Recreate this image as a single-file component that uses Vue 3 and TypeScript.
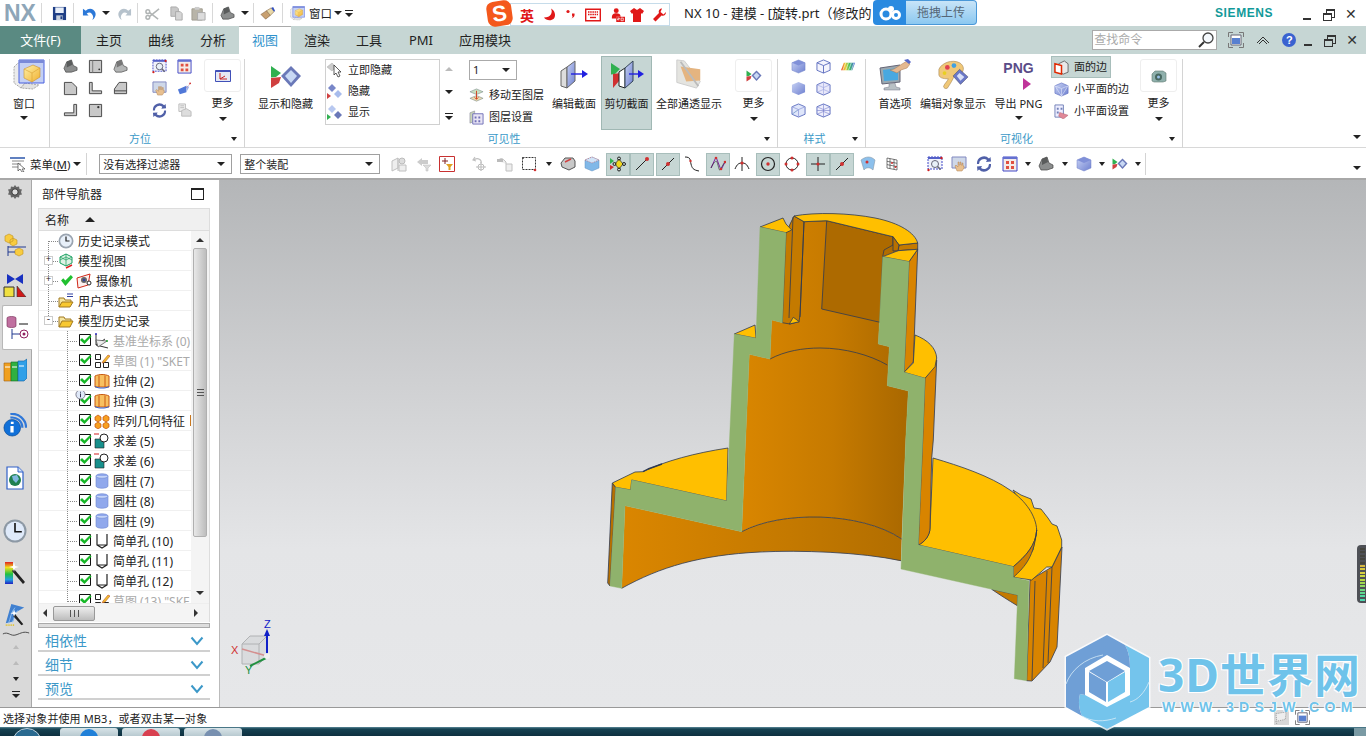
<script setup lang="ts">
interface ToolItem {
  icon?: string;
  w: number;
  on?: boolean;
  caret?: boolean;
}

interface TreeRow {
  label: string;
  icon: string;
  level: 0 | 1;
  check?: boolean;
  expand?: "+" | "-";
  gray?: boolean;
  info?: boolean;
  mark?: boolean;
}

const tabs = ["主页", "曲线", "分析", "视图", "渲染", "工具", "PMI", "应用模块"];

const orientIcons = ["v-iso", "v-top", "v-iso2", "v-front", "v-l", "v-cut", "v-r", "v-dot"];
const fitIcons = ["fit", "fit-sel", "pan", "persp", "rotate", "print"];
const styleIcons = ["c1", "c2", "rainbow", "c3", "c4", "", "c5", "c6"];

const imeIcons = [
  { icon: "i-moon", w: 13, ml: 9 },
  { icon: "i-punct", w: 9, ml: 10 },
  { icon: "i-keys", w: 16, ml: 10 },
  { icon: "i-user", w: 16, ml: 9 },
  { icon: "i-shirt", w: 14, ml: 4 },
  { icon: "i-wrench", w: 13, ml: 9 },
];

const toolItems: ToolItem[] = [
  { icon: "g-filter", w: 24 },
  { icon: "g-arrow", w: 24 },
  { icon: "red-filter", w: 24 },
  { w: 9 },
  { icon: "g-target", w: 24 },
  { icon: "g-wire", w: 25 },
  { icon: "box-sel", w: 24 },
  { caret: true, w: 15 },
  { icon: "v-tool", w: 24 },
  { icon: "cube-sel", w: 23 },
  { w: 3 },
  { icon: "s-all", w: 24, on: true },
  { icon: "s-end", w: 24, on: true },
  { w: 2 },
  { icon: "s-mid", w: 24, on: true },
  { icon: "s-curve", w: 24 },
  { w: 2 },
  { icon: "s-ctl", w: 24, on: true },
  { icon: "s-int", w: 24 },
  { w: 2 },
  { icon: "s-center", w: 24, on: true },
  { icon: "s-quad", w: 24 },
  { w: 2 },
  { icon: "s-cross", w: 24, on: true },
  { icon: "s-mid", w: 24, on: true },
  { w: 2 },
  { icon: "s-face", w: 24 },
  { icon: "s-grid", w: 24 },
  { w: 8 },
  { w: 1 },
  { w: 10 },
  { icon: "fit", w: 24 },
  { icon: "pan", w: 24 },
  { icon: "rotate", w: 26 },
  { icon: "fit-sel", w: 25 },
  { caret: true, w: 12 },
  { icon: "v-iso", w: 24 },
  { caret: true, w: 13 },
  { icon: "c1", w: 25 },
  { caret: true, w: 12 },
  { icon: "show-hide", w: 23 },
  { caret: true, w: 14 },
];

const treeRows: TreeRow[] = [
  { label: "历史记录模式", icon: "t-clock", level: 0 },
  { label: "模型视图", icon: "t-view", level: 0, expand: "+" },
  { label: "摄像机", icon: "t-cam", level: 0, expand: "+", check: true },
  { label: "用户表达式", icon: "t-folder2", level: 0 },
  { label: "模型历史记录", icon: "t-folder", level: 0, expand: "-" },
  { label: "基准坐标系 (0)", icon: "t-csys", level: 1, check: true, gray: true },
  { label: "草图 (1) \"SKET", icon: "t-sketch", level: 1, check: true, gray: true },
  { label: "拉伸 (2)", icon: "t-extrude", level: 1, check: true },
  { label: "拉伸 (3)", icon: "t-extrude", level: 1, check: true, info: true },
  { label: "阵列几何特征", icon: "t-pattern", level: 1, check: true, mark: true },
  { label: "求差 (5)", icon: "t-sub", level: 1, check: true },
  { label: "求差 (6)", icon: "t-sub", level: 1, check: true },
  { label: "圆柱 (7)", icon: "t-cyl", level: 1, check: true },
  { label: "圆柱 (8)", icon: "t-cyl", level: 1, check: true },
  { label: "圆柱 (9)", icon: "t-cyl", level: 1, check: true },
  { label: "简单孔 (10)", icon: "t-hole", level: 1, check: true },
  { label: "简单孔 (11)", icon: "t-hole", level: 1, check: true },
  { label: "简单孔 (12)", icon: "t-hole", level: 1, check: true },
  { label: "草图 (13) \"SKE", icon: "t-sketch", level: 1, check: true, gray: true },
];

const sections = ["相依性", "细节", "预览"];

const meterBars = ["#45453f", "#45453f", "#45453f", "#45453f", "#45453f", "#d8b840", "#d8c840", "#d8d040", "#c8d840", "#b8d840", "#a0d850", "#90d860", "#70d880", "#60d890", "#50d8a0", "#50d8b0"];

const iconHref = (name: string) => `#${name}`;
</script>

<template>
  <div class="app">
    <svg class="sprite" width="0" height="0" aria-hidden="true">
      <defs>
        <linearGradient id="gr-cube" x1="0" y1="0" x2="1" y2="1"><stop offset="0" stop-color="#c8d2f4" /><stop offset="1" stop-color="#6e80d0" /></linearGradient>
        <linearGradient id="gr-yel" x1="0" y1="0" x2="1" y2="1"><stop offset="0" stop-color="#fff2a8" /><stop offset="1" stop-color="#f0b030" /></linearGradient>
        <linearGradient id="gr-rain" x1="0" y1="0" x2="1" y2="0"><stop offset="0" stop-color="#e84030" /><stop offset=".3" stop-color="#f0d030" /><stop offset=".6" stop-color="#40c060" /><stop offset="1" stop-color="#4060e0" /></linearGradient>
        <linearGradient id="gr-rail" x1="0" y1="0" x2="0" y2="1"><stop offset="0" stop-color="#e02020" /><stop offset=".25" stop-color="#f0e020" /><stop offset=".55" stop-color="#20c040" /><stop offset=".8" stop-color="#20a0e0" /><stop offset="1" stop-color="#2020c0" /></linearGradient>
        <linearGradient id="gr-inner" x1="0" y1="0" x2="1" y2="0"><stop offset="0" stop-color="#d98600" /><stop offset=".55" stop-color="#c67a00" /><stop offset="1" stop-color="#a96800" /></linearGradient>
        <linearGradient id="gr-ring" x1="0" y1="0" x2="1" y2="0"><stop offset="0" stop-color="#da8600" /><stop offset=".6" stop-color="#c47900" /><stop offset="1" stop-color="#b26e00" /></linearGradient>
      </defs>
      <symbol id="save" viewBox="0 0 16 16"><path d="M1 1h14v14H1z" fill="#1f3f86" /><path d="M3.500 1.500h9v6h-9z" fill="#e8eef8" /><path d="M4.500 10h7v5h-7z" fill="#c8d0dc" /><path d="M9 11h2v3H9z" fill="#1f3f86" /></symbol>
      <symbol id="undo" viewBox="0 0 16 16"><path d="M1 3v7h6L5 8c3-2 6-1 7 4-.5 1-.5 2-1 3 4-3 5-8 1-11-3-2-6-1-8 1L1 3z" fill="#2b78d8" /></symbol>
      <symbol id="redo" viewBox="0 0 16 16"><path d="M15 3v7H9l2-2c-3-2-6-1-7 4 .5 1 .5 2 1 3-4-3-5-8-1-11 3-2 6-1 8 1l3-2z" fill="#b6c2cc" /></symbol>
      <symbol id="cut" viewBox="0 0 16 16"><g fill="none" stroke="#b0b4b4" stroke-width="1.600"><circle cx="3" cy="12" r="2" /><circle cx="3" cy="6" r="2" /><path d="M5 11l10-8M5 7l9 7" /></g></symbol>
      <symbol id="copy" viewBox="0 0 16 16"><path d="M2 1h6l2 2v8H2z" fill="#c8c8c8" stroke="#aaa" /><path d="M7 6h5l2 2v7H7z" fill="#d6d6d6" stroke="#aaa" /></symbol>
      <symbol id="paste" viewBox="0 0 16 16"><path d="M1 3h11v12H1z" fill="#b8b4a8" stroke="#a09c90" /><path d="M4 1h5v3H4z" fill="#ccc" /><path d="M7 7h8v8H7z" fill="#dcdcdc" stroke="#aaa" /></symbol>
      <symbol id="brush" viewBox="0 0 16 16"><path d="M1 9l6-4 4 5-5 4z" fill="#c8a070" stroke="#806040" stroke-width=".6" /><path d="M7 5l5-3 3 4-4 4z" fill="#e8d8a8" stroke="#806040" stroke-width=".6" /><path d="M12 2l2-1 2 4-1 1z" fill="#3050c0" /></symbol>
      <symbol id="v-iso" viewBox="0 0 16 16"><path d="M1 10L4 3l5-2 2 6 4 2v3l-6 2H3z" fill="#8b8d8d" stroke="#444" stroke-width=".7" /><path d="M4 3l5-2 1 5-6 3z" fill="#5a5c5c" /></symbol>
      <symbol id="v-iso2" viewBox="0 0 16 16"><path d="M1 11L4 3l5-2 2 6 4 2v3l-6 2H3z" fill="#b4b6b6" stroke="#444" stroke-width=".7" /><path d="M4 3l5-2 1 5-6 3z" fill="#777" /></symbol>
      <symbol id="v-top" viewBox="0 0 16 16"><path d="M1.500 1.500h13v13h-13z" fill="#c8c8c8" stroke="#444" /><path d="M5 1.500v13" stroke="#777" fill="none" /><circle cx="12" cy="11" r="1" fill="#333" /></symbol>
      <symbol id="v-front" viewBox="0 0 16 16"><path d="M1.500 1.500h8l5 5v8h-13z" fill="#c8c8c8" stroke="#444" /></symbol>
      <symbol id="v-l" viewBox="0 0 16 16"><path d="M1.500 1.500h3v9h10v3h-13z" fill="#c8c8c8" stroke="#444" /></symbol>
      <symbol id="v-cut" viewBox="0 0 16 16"><path d="M1.500 13.500v-5l5-7h8v12z" fill="#c8c8c8" stroke="#444" /><path d="M1.500 10.500h13" stroke="#444" fill="none" /></symbol>
      <symbol id="v-r" viewBox="0 0 16 16"><path d="M11.500 1.500h3v12h-13v-3h10z" fill="#c8c8c8" stroke="#444" /></symbol>
      <symbol id="v-dot" viewBox="0 0 16 16"><path d="M1.500 1.500h13v13h-13z" fill="#c8c8c8" stroke="#444" /><circle cx="11" cy="4.500" r="1.200" fill="#333" /></symbol>
      <symbol id="fit" viewBox="0 0 16 16"><path d="M1 1h14v12H1z" fill="#f0f2fa" stroke="#4048c8" stroke-dasharray="2 1" /><path d="M1 1h14v2H1z" fill="#5460c8" /><circle cx="8" cy="8" r="3.500" fill="#e8f0f8" stroke="#667" /><path d="M10.500 10.500l3 3" stroke="#667" stroke-width="1.600" /><circle cx="1.500" cy="14" r="1.200" fill="#d02020" /><circle cx="14.500" cy="2" r="1.200" fill="#d02020" /></symbol>
      <symbol id="fit-sel" viewBox="0 0 16 16"><path d="M1 1h14v14H1z" fill="#f4ece8" stroke="#4048c8" /><path d="M1 1h14v2H1z" fill="#6470d0" /><path d="M4 5h3v3H4zM9 5h3v3H9zM4 10h3v3H4zM9 10h3v3H9z" fill="#e05040" /></symbol>
      <symbol id="pan" viewBox="0 0 16 16"><path d="M1 1h14v11H1z" fill="#cfd8e8" stroke="#8088c0" /><path d="M6 15l-2-5 1-1 2 2V6h1v3h1V6h1v3h1V7h1v3h1v2l-2 3z" fill="#e8c090" stroke="#b08050" stroke-width=".5" /></symbol>
      <symbol id="persp" viewBox="0 0 16 16"><path d="M1 9l9-4v7l-7 2z" fill="#5078d8" /><path d="M10 5l3 1-3 6z" fill="#9cb0e8" /><circle cx="14" cy="2.500" r="1" fill="#d03030" /><path d="M10 7l4-4" stroke="#d03030" stroke-width=".6" stroke-dasharray="1 1" /></symbol>
      <symbol id="rotate" viewBox="0 0 16 16"><path d="M3 8a5 5 0 0 1 8-4l-1 2 5-.5-.5-4.500-1.500 1.500A7 7 0 0 0 1 8zM13 8a5 5 0 0 1-8 4l1-2-5 .5.5 4.500 1.500-1.500A7 7 0 0 0 15 8z" fill="#5060a8" /></symbol>
      <symbol id="print" viewBox="0 0 16 16"><path d="M2 1h7v8H2z" fill="#eee" stroke="#bbb" /><path d="M3.500 3h4M3.500 5h4" stroke="#bbb" /><path d="M5 8l5-2 5 3v5H5z" fill="#ddd" stroke="#bbb" /></symbol>
      <symbol id="axis" viewBox="0 0 16 16"><path d="M.5 2.500h15v11H.5z" fill="#e4e8f4" stroke="#4050b8" /><path d="M.5 2.500h15v1.500H.5z" fill="#4050b8" /><path d="M5 5v6h7M5 11l5-3" fill="none" stroke="#c82020" /></symbol>
      <symbol id="win-cube" viewBox="0 0 32 32"><path d="M1 8l4-4h7v20L8 29 1 24z" fill="#ececec" stroke="#aaa" stroke-dasharray="2 1" /><path d="M12 24l14 2-6 4-12-1z" fill="#e2e2e2" stroke="#aaa" stroke-dasharray="2 1" /><path d="M6 1h25v23H6z" fill="#c4d0f4" stroke="#4860e0" /><path d="M6 1h25v3H6z" fill="#7a8ad8" /><path d="M11 10l9-4 7 3v9l-8 5-8-4z" fill="url(#gr-yel)" stroke="#c89030" stroke-width=".6" /><path d="M11 10l8 4 8-5M19 14v9" fill="none" stroke="#d8a030" stroke-width=".6" /></symbol>
      <symbol id="show-hide" viewBox="0 0 32 24"><path d="M1 1l10 7-5 4-5 .5z" fill="#30b050" /><path d="M1 23V13l10-1-2 6z" fill="#d04040" /><path d="M11 11L21 1l10 10-10 11z" fill="#6a78b8" /><path d="M15 11l6-6 6 6-6 7z" fill="#c8d8f4" /></symbol>
      <symbol id="cursor-hide" viewBox="0 0 16 16"><path d="M0 5l5-4 4 4-4 4z" fill="#ccc" stroke="#aaa" stroke-width=".5" /><path d="M7 3l7 7h-3l2 4-2 1-2-4-2 2z" fill="#fff" stroke="#333" stroke-width=".8" /></symbol>
      <symbol id="hide" viewBox="0 0 16 16"><path d="M1 5l4-4 4 4-4 4z" fill="#7886c8" /><path d="M7 11l4-4 4 4-4 4z" fill="#a8bcec" /><path d="M0 10l4 3-4 3z" fill="#d04040" /></symbol>
      <symbol id="show" viewBox="0 0 16 16"><path d="M1 5l4-4 4 4-4 4z" fill="#b8c8f0" /><path d="M7 11l4-4 4 4-4 4z" fill="#6a78b8" /><path d="M0 10l4 3-4 3z" fill="#30b050" /></symbol>
      <symbol id="layer-move" viewBox="0 0 16 16"><path d="M1 4l7-3 7 3-7 3z" fill="#c8e0c0" stroke="#788" stroke-width=".6" /><path d="M1 11l7-3 7 3-7 3z" fill="#ecdcb0" stroke="#788" stroke-width=".6" /><path d="M8 3v9M6 10l2 2 2-2" fill="none" stroke="#d04020" /></symbol>
      <symbol id="layer-set" viewBox="0 0 16 16"><path d="M1 3l5-2v11l-5 2z" fill="#c8d4b8" stroke="#889" stroke-width=".6" /><path d="M4 4h11v11H4z" fill="#e8e4f4" stroke="#7070b8" /><path d="M6 7h2v2H6zM10 7h2v2h-2zM6 11h2v2H6zM10 11h2v2h-2z" fill="#7070b8" /></symbol>
      <symbol id="edit-sec" viewBox="0 0 28 28"><path d="M1 11l6-4v21l-6-2z" fill="#ddd" stroke="#666" /><path d="M7 7l8-6v20l-8 7z" fill="url(#gr-cube)" stroke="#666" /><path d="M11 14h12" stroke="#2020e0" stroke-width="1.400" /><path d="M22 10l6 4-6 4z" fill="#2020e0" /></symbol>
      <symbol id="cut-sec" viewBox="0 0 34 30"><path d="M1 4l9 6-5 5-4 .5z" fill="#30b050" /><path d="M3 29V15l8-1-2 8z" fill="#d03030" /><path d="M9 13l6-4v20l-6-2z" fill="#fff" stroke="#222" /><path d="M15 9l8-7v20l-8 7z" fill="url(#gr-cube)" stroke="#345" /><path d="M19 15h10" stroke="#2020e0" stroke-width="1.400" /><path d="M28 11l6 4-6 4z" fill="#2020e0" /></symbol>
      <symbol id="xray" viewBox="0 0 28 32"><path d="M1 1l8 1 17 22-4 7-21-6z" fill="#e4e4e0" stroke="#ccc" /><path d="M5 8l21 3v12l-15 1z" fill="#e4b480" /><path d="M5 3l19 26" stroke="#bbb" stroke-width="2" fill="none" /></symbol>
      <symbol id="c1" viewBox="0 0 16 16"><path d="M1 4l7-3 7 3v8l-7 3-7-3z" fill="url(#gr-cube)" stroke="#7080c8" stroke-width=".5" /><path d="M1 4l7 3 7-3-7-3z" fill="#8090d8" /></symbol>
      <symbol id="c2" viewBox="0 0 16 16"><path d="M1 4l7-3 7 3v8l-7 3-7-3z" fill="#f4f4fc" stroke="#6070c0" /><path d="M1 4l7 3 7-3M8 7v8" fill="none" stroke="#6070c0" /></symbol>
      <symbol id="c3" viewBox="0 0 16 16"><path d="M1 4l7-3 7 3v8l-7 3-7-3z" fill="url(#gr-cube)" /></symbol>
      <symbol id="c4" viewBox="0 0 16 16"><path d="M1 4l7-3 7 3v8l-7 3-7-3z" fill="#e8e8fa" stroke="#6070c0" /><path d="M1 4l7 3 7-3M8 7v8M1 12l7-3 7 3M8 1v8" fill="none" stroke="#a0a8e0" stroke-width=".7" /></symbol>
      <symbol id="c5" viewBox="0 0 16 16"><path d="M1 4l7-3 7 3v8l-7 3-7-3z" fill="#dfe6fa" stroke="#6070c0" /><path d="M1 4l7 3 7-3M8 7v8" fill="none" stroke="#a0a8e0" /><path d="M1 12l7-5" stroke="#80a0d0" fill="none" /></symbol>
      <symbol id="c6" viewBox="0 0 16 16"><path d="M1 4l7-3 7 3v8l-7 3-7-3z" fill="#eeeefc" stroke="#6070c0" /><path d="M1 4l7 3 7-3M8 7v8M1 12l7-3 7 3M8 1v8M1 8l14 0" fill="none" stroke="#8088d0" stroke-width=".7" /></symbol>
      <symbol id="rainbow" viewBox="0 0 16 16"><path d="M3 4h12l-3 8H0z" fill="url(#gr-rain)" /><path d="M5 4L2 12M8 4l-3 8M11 4l-3 8M14 4l-3 8" stroke="#fff" stroke-width=".6" /></symbol>
      <symbol id="pref" viewBox="0 0 32 32"><path d="M1 9l20-3v17L3 25z" fill="#9aa8b0" stroke="#667" /><path d="M4 11l15-2v12L5 22z" fill="#48a8e0" /><path d="M10 25l6-1 1 4 4 1v2H5v-2l5-1z" fill="#b8c0c4" stroke="#778" stroke-width=".5" /><path d="M11 11l4-1 8-5 5-3 3 3-3 4-6 2-4 3z" fill="#e4b890" stroke="#a87850" stroke-width=".5" /><path d="M25 1l5 4 2-2-3-3z" fill="#5868c8" /></symbol>
      <symbol id="palette" viewBox="0 0 34 32"><path d="M2 10c3-7 14-11 22-7 5 3 5 8 2 11-4 2-8 2-9 6-2 4-4 7-6 10-2 1-4 0-4-2 1-3 4-5 5-8-3 0-9 0-10-4z" fill="#f0c878" stroke="#a08050" stroke-width=".6" /><circle cx="11" cy="8" r="2.500" fill="#e04050" /><circle cx="18" cy="6" r="2.500" fill="#40a0e0" /><circle cx="8" cy="14" r="2" fill="#e8d020" /><path d="M17 17l7-7 9 8-8 8z" fill="#6a78c8" stroke="#445" stroke-width=".5" /><path d="M21 17l3-3 5 4-4 4z" fill="#d8e0f8" /></symbol>
      <symbol id="face-edge" viewBox="0 0 16 16"><path d="M5 4l6-3 4 3v9l-5 2-5-2z" fill="#e8e8e8" stroke="#666" /><path d="M1 4l7 2v9l-7-2z" fill="#fff" stroke="#e02800" stroke-width="1.600" /></symbol>
      <symbol id="facet-edge" viewBox="0 0 16 16"><path d="M1 4l7-3 7 3v8l-7 3-7-3z" fill="url(#gr-cube)" stroke="#6070c0" stroke-width=".7" /><path d="M1 4l7 3 7-3M8 7v8M1 4l7 11M15 4L8 15" fill="none" stroke="#e8ecfc" stroke-width=".6" /></symbol>
      <symbol id="facet-set" viewBox="0 0 16 16"><path d="M1 1h9v13H1z" fill="#eef" stroke="#7080b8" /><path d="M3 4h2v2H3zM7 4h2v2H7zM3 8h2v2H3z" fill="#7080b8" /><path d="M6 9l9 3-5 4-5-3z" fill="#e08898" stroke="#b06070" stroke-width=".5" /></symbol>
      <symbol id="camera" viewBox="0 0 16 16"><path d="M1 6l3-3h8l3 2v8l-3 1H3l-2-1z" fill="#8fb0ac" stroke="#607870" stroke-width=".6" /><circle cx="7.500" cy="9" r="3.500" fill="#486860" /><circle cx="7.500" cy="9" r="1.500" fill="#98c0e8" /></symbol>
      <symbol id="menu" viewBox="0 0 16 16"><path d="M0 1h15v2H0z" fill="#6080c0" /><path d="M2 5h12M2 8h9M2 11h6" stroke="#888" /><path d="M8 7l7 6h-3l2 3h-2l-2-3-2 2z" fill="#fff" stroke="#444" stroke-width=".7" /></symbol>
      <symbol id="g-filter" viewBox="0 0 16 16"><path d="M1 5l6-3v10l-6 3zM7 2v13" fill="#eee" stroke="#c0c0c0" /><circle cx="11" cy="5" r="3" fill="#ddd" stroke="#bbb" /><path d="M8 9h7v6H8z" fill="#eee" stroke="#c0c0c0" /></symbol>
      <symbol id="g-arrow" viewBox="0 0 16 16"><path d="M2 6l5-4v2h6v4H7v2z" fill="#ccc" /><path d="M8 9h8l-3 3v3h-2v-3z" fill="#ddd" stroke="#bbb" stroke-width=".5" /></symbol>
      <symbol id="red-filter" viewBox="0 0 16 16"><path d="M.5 .5h15v15H.5z" fill="#fff" stroke="#c83030" /><path d="M3 5h6M6 2v6" stroke="#802020" /><path d="M7 8h7l-2.500 3v3h-2v-3z" fill="#e0a020" /></symbol>
      <symbol id="g-target" viewBox="0 0 16 16"><path d="M3 1L1 4l3 1M2 4c4-3 8 0 7 3" fill="none" stroke="#c0c0c0" stroke-width="1.200" /><circle cx="9" cy="11" r="3" fill="none" stroke="#bbb" /><path d="M4 11h10M9 6v9" stroke="#bbb" /></symbol>
      <symbol id="g-wire" viewBox="0 0 16 16"><path d="M1 5c2-3 4-3 6-1l2 2v9h6V8H9" fill="#eee" stroke="#c0c0c0" /><path d="M0 3h6v3H0z" fill="#bbb" /></symbol>
      <symbol id="box-sel" viewBox="0 0 16 16"><path d="M1.500 1.500h13v12h-13z" fill="none" stroke="#333" stroke-dasharray="2 1" /><circle cx="14" cy="14" r="1.300" fill="#d03030" /><circle cx="2" cy="2" r="1" fill="#555" /></symbol>
      <symbol id="v-tool" viewBox="0 0 16 16"><path d="M1 7l4-5h8l2 3v6l-6 3-7-3z" fill="#c8c8c8" stroke="#555" /><path d="M5 6l6-3" stroke="#d04040" stroke-width="1.400" /></symbol>
      <symbol id="cube-sel" viewBox="0 0 16 16"><path d="M1 4l7-3 7 3v8l-7 3-7-3z" fill="#80b8e8" stroke="#6090c0" stroke-width=".5" /><path d="M1 4l7 3 7-3-7-3z" fill="#d0e4f8" stroke="#d04040" stroke-width=".5" stroke-dasharray="1 1" /></symbol>
      <symbol id="s-all" viewBox="0 0 16 16"><path d="M0 2l4 3-4 3z" fill="#30b050" /><path d="M0 9l4 2-4 3z" fill="#d03030" /><path d="M9 3l4 5-4 5-4-5z" fill="#f0d820" stroke="#222" stroke-width=".7" /><circle cx="9" cy="2.500" r="1.500" fill="none" stroke="#222" /><circle cx="9" cy="13.500" r="1.500" fill="none" stroke="#222" /><circle cx="14" cy="8" r="1.500" fill="none" stroke="#222" /><circle cx="4.500" cy="8" r="1.500" fill="none" stroke="#222" /></symbol>
      <symbol id="s-end" viewBox="0 0 16 16"><path d="M2 14L14 2" stroke="#222" fill="none" /><circle cx="13" cy="3" r="2" fill="#d03030" /></symbol>
      <symbol id="s-mid" viewBox="0 0 16 16"><path d="M2 14L14 2" stroke="#222" fill="none" /><circle cx="8" cy="8" r="2" fill="#d03030" /></symbol>
      <symbol id="s-curve" viewBox="0 0 16 16"><path d="M1 1c6 0 5 3 6 7s2 6 8 7" fill="none" stroke="#222" /><circle cx="6.500" cy="5" r="1.200" fill="#d03030" /></symbol>
      <symbol id="s-ctl" viewBox="0 0 16 16"><path d="M1 12L6 1l5 13 4-8" fill="none" stroke="#8020a0" /><path d="M1 12c3-6 5-8 6-6s2 9 3 8 3-6 5-8" fill="none" stroke="#222" stroke-width=".6" /><circle cx="6" cy="2" r="1.300" fill="#d03030" /><circle cx="11" cy="13" r="1.300" fill="#d03030" /><circle cx="15" cy="6" r="1.300" fill="#d03030" /></symbol>
      <symbol id="s-int" viewBox="0 0 16 16"><path d="M8 1v14M1 13c2-5 4-6 7-6s5 1 7 6" fill="none" stroke="#222" /><circle cx="8" cy="7" r="1.600" fill="#d03030" /></symbol>
      <symbol id="s-center" viewBox="0 0 16 16"><circle cx="8" cy="8" r="6.500" fill="none" stroke="#222" stroke-width="1.200" /><circle cx="8" cy="8" r="1.700" fill="#d03030" /></symbol>
      <symbol id="s-quad" viewBox="0 0 16 16"><circle cx="8" cy="8" r="6" fill="none" stroke="#222" /><circle cx="8" cy="2" r="1.500" fill="#d03030" /><circle cx="8" cy="14" r="1.500" fill="#d03030" /><circle cx="2" cy="8" r="1.500" fill="#d03030" /><circle cx="14" cy="8" r="1.500" fill="#d03030" /></symbol>
      <symbol id="s-cross" viewBox="0 0 16 16"><path d="M8 1v14M1 8h14" stroke="#222" /><circle cx="8" cy="8" r="1.600" fill="#d03030" /></symbol>
      <symbol id="s-face" viewBox="0 0 16 16"><path d="M1 4c5-4 10-4 14 0l-2 10c-3-3-7-3-9 0z" fill="#8cc0ec" stroke="#8898a8" stroke-width=".6" /><circle cx="7" cy="6" r="1.500" fill="#d03030" /></symbol>
      <symbol id="s-grid" viewBox="0 0 16 16"><path d="M3 2l10 2v10L3 12zM6 2.600v10M10 3.400v10M3 5.300l10 2M3 8.600l10 2" fill="#fff" stroke="#444" stroke-width=".7" /><circle cx="8" cy="7" r="1" fill="#d03030" /><circle cx="11.500" cy="11" r="1" fill="#d03030" /></symbol>
      <symbol id="t-clock" viewBox="0 0 16 16"><circle cx="8" cy="8" r="7.500" fill="#9aa4b0" /><circle cx="8" cy="8" r="5.800" fill="#e8f0fa" /><path d="M8 3.500V8h3.500" fill="none" stroke="#222" stroke-width="1.200" /></symbol>
      <symbol id="t-view" viewBox="0 0 16 16"><path d="M8 1l6 3v6l-6 3-6-3V4z" fill="#dff2e4" stroke="#18a060" /><path d="M2 4l6 3 6-3M8 7v6M2 7l6-3 6 3M8 1v6" fill="none" stroke="#18a060" stroke-width=".7" /><path d="M8 15l6-3" stroke="#e02020" stroke-width="1.400" /></symbol>
      <symbol id="t-cam" viewBox="0 0 16 16"><path d="M1 5l13-4-2 11-10 3z" fill="#fdf0ee" stroke="#d02818" /><circle cx="8" cy="7" r="3" fill="#666" /><circle cx="8" cy="7" r="1.200" fill="#3040a0" /><circle cx="13" cy="10" r="2" fill="#fff" stroke="#222" /></symbol>
      <symbol id="t-folder" viewBox="0 0 16 16"><path d="M1 14V4h5l1 2h6v2" fill="#f6e6a0" stroke="#a07820" /><path d="M1 14l3-6h11l-3 6z" fill="#f8c830" stroke="#a07820" /></symbol>
      <symbol id="t-folder2" viewBox="0 0 16 16"><path d="M1 14V5h5l1 2h6v2" fill="#f6e6a0" stroke="#a07820" /><path d="M1 14l3-5h11l-3 5z" fill="#f8c830" stroke="#a07820" /><path d="M9 1h6M9 3.500h6" stroke="#3040a0" stroke-width="1.200" /></symbol>
      <symbol id="t-check" viewBox="0 0 12 12"><path d="M1 6l2-2 2 2 5-5 2 2-7 8z" fill="#20c030" /></symbol>
      <symbol id="t-box" viewBox="0 0 13 13"><path d="M.5 .5h11v11H.5z" fill="#fff" stroke="#111" /><path d="M1 6l2-2 2.500 2.500L11 1l1.500 1.500L5.500 10z" fill="#18b828" /></symbol>
      <symbol id="t-csys" viewBox="0 0 16 16"><path d="M2 1v11M2 12l12 3M2 12l9-6" fill="none" stroke="#333" /><path d="M2 7l11 1-9 6z" fill="#eee" stroke="#444" stroke-width=".7" /><circle cx="13" cy="8" r="1" fill="#20a030" /><circle cx="2" cy="1" r="1" fill="#3030c0" /></symbol>
      <symbol id="t-sketch" viewBox="0 0 16 16"><path d="M1.500 1.500h5v5h-5zM1.500 9.500h5v5h-5zM9.500 9.500h5v5h-5z" fill="#fff" stroke="#222" /><path d="M9 8l5-6 2 1-5 6-3 1z" fill="#f0c030" stroke="#c05020" stroke-width=".6" /></symbol>
      <symbol id="t-extrude" viewBox="0 0 16 16"><path d="M1 3c4-2 10-2 14 0v11H1z" fill="#f8c060" stroke="#c85810" /><path d="M5 2.500V14M11 2.500V14" stroke="#c85810" /><path d="M1 13c4 2 10 2 14 0v1c-4 2-10 2-14 0z" fill="#3060d0" /></symbol>
      <symbol id="t-pattern" viewBox="0 0 16 16"><g fill="#f8a020" stroke="#c05010" stroke-width=".7"><path d="M1 4l3-2 3 2v3l-3 2-3-2z" /><path d="M9 4l3-2 3 2v3l-3 2-3-2z" /><path d="M1 11l3-2 3 2v3l-3 2-3-2z" /><path d="M9 11l3-2 3 2v3l-3 2-3-2z" /></g></symbol>
      <symbol id="t-sub" viewBox="0 0 16 16"><path d="M0 1h5" stroke="#d02020" /><path d="M1 6h9v9H1z" fill="#18908c" stroke="#222" stroke-width=".6" /><circle cx="10" cy="5" r="4" fill="#fff" stroke="#222" /></symbol>
      <symbol id="t-cyl" viewBox="0 0 16 16"><path d="M2 3c0-3 12-3 12 0v10c0 3-12 3-12 0z" fill="#90a8ec" stroke="#7088d0" stroke-width=".6" /><path d="M2 3c0 3 12 3 12 0" fill="#c4d4f8" stroke="#7088d0" stroke-width=".6" /></symbol>
      <symbol id="t-hole" viewBox="0 0 16 16"><path d="M3 1v11l5 3 5-3V1M3 12h10" fill="none" stroke="#222" stroke-width="1.200" /></symbol>
      <symbol id="gear" viewBox="0 0 16 16"><path d="M8 1l1.500 2 2.500-.5.500 2.500 2.500.5L14 8l1 2.500-2.500.5-.5 2.500-2.500-.5L8 15l-1.500-2-2.500.5-.5-2.500-2.500-.5L2 8 1 5.500l2.500-.5.500-2.500 2.500.5z" fill="#666" /><circle cx="8" cy="8" r="3.200" fill="#ddd" stroke="#333" /></symbol>
      <symbol id="r-parts" viewBox="0 0 24 24"><path d="M2 3l4-2 4 2v5l-4 2-4-2zM7 7l3-2 4 2v4l-4 2-3-2z" fill="#f8cc40" stroke="#c09020" stroke-width=".6" /><path d="M12 17l4-2 4 2v4l-4 2-4-2z" fill="#f8cc40" stroke="#c09020" stroke-width=".6" /><path d="M5 13v10M5 14h18M5 19h7" stroke="#223a90" fill="none" /></symbol>
      <symbol id="r-constraint" viewBox="0 0 24 24"><path d="M4 1l8 5 8-5v10l-8-5-8 5z" fill="#1830c0" /><path d="M1 14h10v10H1z" fill="#f0e040" stroke="#333" /><path d="M14 24V13l9 11z" fill="#d01818" stroke="#333" stroke-width=".6" /></symbol>
      <symbol id="r-assy" viewBox="0 0 24 24"><path d="M1 2c0-2 9-2 9 0v8c0 2-9 2-9 0z" fill="#c070a0" stroke="#702850" stroke-width=".6" /><path d="M13 8h9" stroke="#111" /><path d="M6 13v10M6 18h8" stroke="#223a90" fill="none" /><circle cx="18" cy="18" r="4" fill="#fff" stroke="#902060" /><circle cx="18" cy="18" r="1.500" fill="#902060" /></symbol>
      <symbol id="r-books" viewBox="0 0 24 24"><path d="M1 5h7v18H1z" fill="#f0a020" stroke="#a06010" stroke-width=".6" /><path d="M8 4h7v19H8z" fill="#30b040" stroke="#107020" stroke-width=".6" /><path d="M15 3h6l3-2v19l-3 3h-6z" fill="#30a0e8" stroke="#1060a0" stroke-width=".6" /><path d="M2 9h5M9 9h5M16 8h5" stroke="#fff" /></symbol>
      <symbol id="r-info" viewBox="0 0 26 26"><circle cx="10" cy="16" r="9" fill="#1070d8" stroke="#0a4890" stroke-width=".7" /><path d="M8.500 9.500h3v2.500h-3zM8 14h3.500v7H8z" fill="#fff" /><path d="M8 5c7-1 13 4 13 11M8 1c9-1 17 6 17 15" fill="none" stroke="#3078d8" stroke-width="2.400" /></symbol>
      <symbol id="r-page" viewBox="0 0 18 24"><path d="M1 1h11l5 5v17H1z" fill="#fff" stroke="#3060c8" stroke-width="1.200" /><path d="M12 1v5h5" fill="#d0e0f8" stroke="#3060c8" /><circle cx="9" cy="14" r="6" fill="#208050" /><path d="M6 10l5-1 2 4-3 4-3-3z" fill="#80b8e0" /></symbol>
      <symbol id="r-clock" viewBox="0 0 24 24"><circle cx="12" cy="12" r="11.500" fill="#8c98a4" /><circle cx="12" cy="12" r="9.500" fill="#dfeafa" /><path d="M11.200 4h1.600v8h6v1.600h-7.600z" fill="#111" /></symbol>
      <symbol id="r-color" viewBox="0 0 24 24"><path d="M2 1h8v22H2z" fill="url(#gr-rail)" /><path d="M11 8l11 13-2 2L9 10z" fill="#222" /><path d="M11 1l1 4 4 1-4 1-1 4-1-4-4-1 4-1z" fill="#fff" /></symbol>
      <symbol id="r-feat" viewBox="0 0 24 26"><path d="M8 1l14 4-9 5-3 10-8 2z" fill="#4080d0" /><path d="M5 22c2-5 3-13 7-17M9 21c2-4 3-9 6-13" stroke="#90c0f0" fill="none" /><path d="M12 12l9 11-2 1-9-10z" fill="#222" /><path d="M11 7l1 3 3 1-3 1-1 3-1-3-3-1 3-1z" fill="#fff" /><path d="M2 24h10" stroke="#e0c020" stroke-width="2" stroke-dasharray="1 1" /></symbol>
      <symbol id="flag" viewBox="0 0 16 16"><path d="M0 0h16v16H0z" fill="#d8d8d8" /><path d="M2 4l11-2-1 8-9 2zM2 12l1 3" fill="#eee" stroke="#999" stroke-dasharray="1 1" /></symbol>
      <symbol id="maxi" viewBox="0 0 16 16"><path d="M.5 5V.5H5M11 .5h4.500V5M15.500 11v4.500H11M5 15.500H.5V11" fill="none" stroke="#777" /><path d="M3 3h10v10H3z" fill="#fff" stroke="#667" /><path d="M4 6h8v6H4z" fill="#5880d0" /></symbol>
      <symbol id="i-moon" viewBox="0 0 13 13"><path d="M8 0c2 4 0 9-7 9 2 3 7 4 10 1 2-3 1-8-3-10z" fill="#e01818" /></symbol>
      <symbol id="i-punct" viewBox="0 0 9 13"><circle cx="2" cy="3" r="1.600" fill="#e01818" /><path d="M6 5h2.500c.5 2-.5 4-3 5 1-1 1.500-2 .5-3z" fill="#e01818" /></symbol>
      <symbol id="i-keys" viewBox="0 0 16 13"><path d="M.7 .7h14.600v11.600H.7z" fill="#fff" stroke="#e01818" stroke-width="1.400" /><path d="M3 3.500h10M3 6h10" stroke="#e01818" stroke-width="1.400" stroke-dasharray="1.500 .7" /><path d="M5 9h6" stroke="#e01818" stroke-width="1.400" /></symbol>
      <symbol id="i-user" viewBox="0 0 16 16"><circle cx="6" cy="3" r="2.800" fill="#e01818" /><path d="M1 11c0-4 2-5 5-5s5 1 5 4H6v2H1z" fill="#e01818" /><path d="M6 10h10v6H6z" fill="#e01818" /><path d="M7.500 11.500h2v1h-2v1h2M11.500 11.500h2.500v3h-2.500z" fill="none" stroke="#fff" stroke-width=".8" /></symbol>
      <symbol id="i-shirt" viewBox="0 0 14 14"><path d="M4 0l3 2 3-2 4 3-2 3-1-1v9H3V5L2 6 0 3z" fill="#e01818" /></symbol>
      <symbol id="i-wrench" viewBox="0 0 13 13"><path d="M9 0C7 0 5 2 6 4.500L0 10.500 2.500 13l6-6C11 8 13 6 13 3.500L10.500 6 7.500 3.500z" fill="#e01818" /></symbol>
    </svg>

    <header class="titlebar">
      <span class="nx-logo">NX</span>
      <i class="vsep s1"></i>
      <svg class="qa q-save"><use href="#save" /></svg>
      <i class="vsep s2"></i>
      <svg class="qa q-undo"><use href="#undo" /></svg>
      <b class="caret q-c1"></b>
      <svg class="qa q-redo"><use href="#redo" /></svg>
      <i class="vsep s3"></i>
      <svg class="qa q-cut"><use href="#cut" /></svg>
      <svg class="qa q-copy"><use href="#copy" /></svg>
      <svg class="qa q-paste"><use href="#paste" /></svg>
      <i class="vsep s4"></i>
      <svg class="qa q-view"><use href="#v-iso" /></svg>
      <b class="caret q-c2"></b>
      <i class="vsep s5"></i>
      <svg class="qa q-brush"><use href="#brush" /></svg>
      <i class="vsep s6"></i>
      <svg class="qa q-win"><use href="#win-cube" /></svg>
      <span class="qa-label">窗口</span>
      <b class="caret"></b>
      <b class="caret-bar"></b>

      <div class="ime">
        <span class="ime-s">S</span>
        <div class="ime-bar">
          <span class="ime-en">英</span>
          <svg v-for="g in imeIcons" :key="g.icon" :style="{ width: g.w + 'px', height: '14px', marginLeft: g.ml + 'px' }"><use :href="iconHref(g.icon)" /></svg>
        </div>
      </div>

      <span class="doc-title">NX 10 - 建模 - [旋转.prt（修改的</span>
      <span class="cloud">
        <svg width="24" height="16" viewBox="0 0 24 16"><circle cx="8" cy="9" r="5" fill="none" stroke="#fff" stroke-width="3" /><circle cx="18" cy="10" r="3.500" fill="none" stroke="#fff" stroke-width="3" /><circle cx="13" cy="4" r="3" fill="#fff" /></svg>
      </span>
      <span class="upload">拖拽上传</span>
      <span class="siemens">SIEMENS</span>
      <div class="win-ctrl">
        <b class="wc-min"></b>
        <b class="wc-max"></b>
        <b class="wc-close">&#10005;</b>
      </div>
    </header>

    <nav class="tabbar">
      <span class="file-tab">文件(F)</span>
      <span v-for="t in tabs" :key="t" class="tab" :class="{ active: t === '视图', wide: t === '应用模块' }">{{ t }}</span>
      <div class="tab-right">
        <div class="search">
          <span>查找命令</span>
          <svg width="18" height="18" viewBox="0 0 18 18"><circle cx="11" cy="7" r="5" fill="#f4f8fc" stroke="#444" stroke-width="1.300" /><path d="M7 11l-5 5" stroke="#333" stroke-width="2" /></svg>
        </div>
        <svg class="tr-maxi"><use href="#maxi" /></svg>
        <svg class="tr-up" viewBox="0 0 14 10"><path d="M1 8l6-6 6 6M3 9l4-4 4 4" fill="none" stroke="#333" /></svg>
        <span class="help">?</span>
        <div class="win-ctrl small">
          <b class="wc-min"></b>
          <b class="wc-max"></b>
          <b class="wc-close">&#10005;</b>
        </div>
      </div>
    </nav>

    <section class="ribbon">
      <div class="group g-win">
        <div class="group-body">
          <div class="big w48 center-x">
            <svg class="ico32"><use href="#win-cube" /></svg>
            <span>窗口</span>
            <b class="caret"></b>
          </div>
        </div>
      </div>

      <div class="group g-orient">
        <div class="group-body">
          <div class="icon-grid three">
            <svg v-for="n in orientIcons" :key="n"><use :href="iconHref(n)" /></svg>
          </div>
          <div class="icon-grid two">
            <svg v-for="n in fitIcons" :key="n"><use :href="iconHref(n)" /></svg>
          </div>
          <div class="more">
            <span class="more-box"><svg><use href="#axis" /></svg></span>
            <span>更多</span>
            <b class="caret"></b>
          </div>
        </div>
        <div class="group-foot"><span>方位</span><b class="caret"></b></div>
      </div>

      <div class="group g-vis">
        <div class="group-body">
          <div class="big w55">
            <svg class="ico-show"><use href="#show-hide" /></svg>
            <span>显示和隐藏</span>
          </div>
          <ul class="gallery">
            <li><svg><use href="#cursor-hide" /></svg>立即隐藏</li>
            <li><svg><use href="#hide" /></svg>隐藏</li>
            <li><svg><use href="#show" /></svg>显示</li>
          </ul>
          <div class="gallery-arrows">
            <b class="caret up"></b>
            <b class="caret"></b>
            <b class="caret-bar"></b>
          </div>
          <div class="layer-col">
            <div class="layer-select"><span>1</span><b class="caret"></b></div>
            <div class="layer-row"><svg><use href="#layer-move" /></svg>移动至图层</div>
            <div class="layer-row"><svg><use href="#layer-set" /></svg>图层设置</div>
          </div>
          <div class="big w46">
            <svg class="ico-sec"><use href="#edit-sec" /></svg>
            <span>编辑截面</span>
          </div>
          <div class="big w51 pressed">
            <svg class="ico-cut"><use href="#cut-sec" /></svg>
            <span>剪切截面</span>
          </div>
          <div class="big w66">
            <svg class="ico-sec"><use href="#xray" /></svg>
            <span>全部通透显示</span>
          </div>
          <div class="more m13">
            <span class="more-box"><svg><use href="#show-hide" /></svg></span>
            <span>更多</span>
            <b class="caret"></b>
          </div>
        </div>
        <div class="group-foot"><span>可见性</span><b class="caret"></b></div>
      </div>

      <div class="group g-style">
        <div class="group-body">
          <div class="icon-grid three">
            <template v-for="(n, i) in styleIcons" :key="i">
              <svg v-if="n"><use :href="iconHref(n)" /></svg>
              <span v-else></span>
            </template>
          </div>
        </div>
        <div class="group-foot"><span>样式</span><b class="caret"></b></div>
      </div>

      <div class="group g-visual">
        <div class="group-body">
          <div class="big w34">
            <svg class="ico32"><use href="#pref" /></svg>
            <span>首选项</span>
          </div>
          <div class="big w66 ml8">
            <svg class="ico32"><use href="#palette" /></svg>
            <span>编辑对象显示</span>
          </div>
          <div class="big w49 ml8">
            <em class="png">PNG</em>
            <i class="png-tri"></i>
            <span class="png-label">导出 PNG</span>
            <b class="caret"></b>
          </div>
          <div class="face-col">
            <div class="face-row on"><svg><use href="#face-edge" /></svg>面的边</div>
            <div class="face-row"><svg><use href="#facet-edge" /></svg>小平面的边</div>
            <div class="face-row"><svg><use href="#facet-set" /></svg>小平面设置</div>
          </div>
          <div class="more m11">
            <span class="more-box"><svg><use href="#camera" /></svg></span>
            <span>更多</span>
            <b class="caret"></b>
          </div>
        </div>
        <div class="group-foot"><span>可视化</span><b class="caret"></b></div>
      </div>

      <div class="group-rest"><b class="caret"></b></div>
    </section>

    <section class="toolbar">
      <svg class="menu-ico"><use href="#menu" /></svg>
      <span class="menu-label">菜单(<u>M</u>)</span>
      <b class="caret"></b>
      <i class="tb-sep first"></i>
      <div class="combo c1w"><span>没有选择过滤器</span><b class="caret"></b></div>
      <div class="combo c2w"><span>整个装配</span><b class="caret"></b></div>
      <div class="tools">
        <template v-for="(t, i) in toolItems" :key="i">
          <span class="tool" :class="{ on: t.on }" :style="{ width: t.w + 'px' }">
            <svg v-if="t.icon"><use :href="iconHref(t.icon)" /></svg>
            <b v-else-if="t.caret" class="caret"></b>
          </span>
        </template>
      </div>
      <i class="tb-sep"></i>
      <b class="caret tb-end"></b>
    </section>

    <main class="workspace">
      <aside class="rail">
        <svg class="rail-gear"><use href="#gear" /></svg>
        <svg class="rail-ico"><use href="#r-parts" /></svg>
        <svg class="rail-ico m-cons"><use href="#r-constraint" /></svg>
        <span class="rail-active"><svg class="rail-ico flat"><use href="#r-assy" /></svg></span>
        <svg class="rail-ico m-books"><use href="#r-books" /></svg>
        <svg class="rail-ico m-info"><use href="#r-info" /></svg>
        <svg class="rail-ico m-page"><use href="#r-page" /></svg>
        <svg class="rail-ico m-clock"><use href="#r-clock" /></svg>
        <svg class="rail-ico m-color"><use href="#r-color" /></svg>
        <svg class="rail-ico m-feat"><use href="#r-feat" /></svg>
        <svg class="rail-wave" viewBox="0 0 32 8"><path d="M2 5c6-3 8 3 14 1s8-4 14-2" fill="none" stroke="#444" /></svg>
        <b class="caret up pale"></b>
        <b class="caret up pale"></b>
        <b class="caret"></b>
        <b class="caret-bar"></b>
      </aside>

      <aside class="navigator">
        <div class="nav-head">
          <span>部件导航器</span>
          <i class="nav-max"></i>
        </div>
        <div class="tree">
          <div class="tree-head"><span>名称</span><i class="sort-up"></i></div>
          <div class="tree-mid">
            <div class="tree-rows">
              <div v-for="(r, i) in treeRows" :key="i" class="row" :class="['lv' + r.level, { gray: r.gray, last: r.expand === '-' }]">
                <span v-if="r.expand" class="exp">{{ r.expand }}</span>
                <svg v-if="r.check && r.level === 0" class="tick"><use href="#t-check" /></svg>
                <span v-if="r.check && r.level === 1" class="box-wrap">
                  <svg class="box"><use href="#t-box" /></svg>
                  <svg v-if="r.info" class="info-badge" viewBox="0 0 12 12"><circle cx="6" cy="6" r="5" fill="#dfe8f8" stroke="#778" /><path d="M5.500 3h1v1h-1zM5.500 5h1v4h-1z" fill="#224" /></svg>
                </span>
                <svg class="row-ico"><use :href="iconHref(r.icon)" /></svg>
                <span class="row-label">{{ r.label }}</span>
                <i v-if="r.mark" class="row-mark"></i>
              </div>
            </div>
            <div class="vscroll">
              <b class="sb-up"></b>
              <i class="sb-thumb"><em></em></i>
              <b class="sb-down"></b>
            </div>
          </div>
          <div class="hscroll">
            <b class="sb-left"></b>
            <i class="hs-thumb"><em></em></i>
            <b class="sb-right"></b>
          </div>
        </div>
        <i class="nav-sash"></i>
        <div v-for="s in sections" :key="s" class="nav-section">
          <span>{{ s }}</span>
          <svg width="14" height="10" viewBox="0 0 14 10"><path d="M1.500 1.500L7 8l5.500-6.500" fill="none" stroke="#3c98c8" stroke-width="2" /></svg>
        </div>
      </aside>

      <div class="viewport">
        <svg class="model" viewBox="220 180 1146 527" width="1146" height="527">
          <g stroke="#2f3a52" stroke-width=".8" stroke-linejoin="round">
            <!-- big flange, right outer wall -->
            <path d="M1030 580L1052 567 1062 547 1057 647 1050 662 1032 681 1026.700 680.700z" fill="#d88400" />
            <path d="M1035 581L1032 680M1047 571L1043 668M1052 567L1048 663" fill="none" />
            <!-- inner ring under flange -->
            <path d="M991.700 589.300L1017.700 595 1017.300 605.700C1008 600 1000 595 991.700 589.300z" fill="#c47a00" />
            <path d="M612.300 483L615.700 487.300 610 586 607.700 583z" fill="#b87000" />
            <!-- lower body -->
            <path d="M625 505.700L741.700 531.700C780 511 860 511 901.700 539L901 561C860 552 800 550 760 552 700 555 660 567 621.700 588.300z" fill="url(#gr-ring)" stroke="none" />
            <path d="M621.700 588.300C660 567 700 555 760 552 800 550 860 552 901 560.700" fill="none" />
            <!-- flange yellow faces -->
            <path d="M728 448C695 453 665 461 643 471.700L635 472 612.300 483 615.700 487.300 630.700 490 631.700 480 726.700 501z" fill="#ffbf00" />
            <path d="M643 471.700L648 469 662 464" fill="none" stroke-width="1.400" />
            <path d="M1013 490L1021 495 1031 499 1034 508 1041 509 1048 518 1052 524 1057 526 1061.700 540 1061.700 547 1052 567 1046.700 567 1031.700 580 1013.300 577.300 1033 550 1036.700 530z" fill="#ffbf00" />
            <path d="M933 458C960 466 990 476 1010 490 1026 501 1036 516 1036.700 530 1036 545 1026 556 1013.300 566.700L918.300 545C925 542 930 535 930 528z" fill="#ffbf00" />
            <path d="M1036.700 530C1036 545 1026 556 1013.300 566.700L1013.300 577.300C1026 566 1034 556 1036.700 530z" fill="#cf7f00" />
            <!-- upper chamber and mid wall -->
            <path d="M786 232L794 216 826 220 893 236.700 899 245 898 250.700 882.700 256.700 878.300 344 889.300 346.700 887.300 385.700 908.300 391 905.700 440 901.700 539C860 511 780 511 741.700 531.700L749.300 354.300 770 359 771.700 320 782.300 322.700z" fill="url(#gr-inner)" stroke="none" />
            <path d="M826.700 220.700L893 236.700 893 245 884 250 882.700 256.700 880 322.300 821.700 309z" fill="#ad6a00" />
            <path d="M794 216L804 221.700 800 315 799 321.700 790 324 782.300 322.700 786 232.700z" fill="#c47a00" />
            <path d="M804 221.700L826.700 220.700M789 318L793 217M804 221.700L800 317" fill="none" />
            <path d="M789.300 324L799.300 321.700 793.300 317.300z" fill="#ffbf00" />
            <path d="M770 359C785 351 803 348 820 348 845 348 870 355 887.300 365" fill="none" />
            <path d="M741.700 531.700C780 511 860 511 901.700 539" fill="none" />
            <!-- right mid wall strip -->
            <path d="M917.700 249.300L913.300 362 904 372.300 909 261.700z" fill="#d88400" />
            <path d="M899 245L917.700 243 917.700 249.300 898 250.700z" fill="#c47a00" />
            <path d="M925 378.300L936.700 360 933.300 440 931.700 458 930 528C930 535 925 542 918.300 545L922.700 440z" fill="#d88400" />
            <path d="M915 335C928 340 936 348 936.700 358L935 366.700 925 378.300 904 372.300 913.300 363z" fill="#ffbf00" />
            <!-- top rim -->
            <path d="M794 216C815 212 850 213 875 218 900 223 915 233 917.700 243L899 245 893 236.700 826.700 220.700 804 221.700z" fill="#ffbf00" />
            <path d="M760 227L783 218 786 224 791.700 230 786 232.700z" fill="#ffbf00" />
            <path d="M882.700 256.700L898 250.700 917.700 249.300 909 261.700z" fill="#ffbf00" />
            <path d="M734.300 334L755 325 756 338.300z" fill="#ffbf00" />
            <path d="M893 236.700L899 245 898 250.700 893 251z" fill="#b87000" />
          </g>
          <g fill="#8fb26c" stroke="#8fb26c" stroke-width=".4">
            <!-- cut section -->
            <path d="M760 227L786 232.700 782.300 322.700 771.700 320 770 359 749.300 354.300 741.700 531.700 625 505.700 621.700 588.300 610 586 615.700 487.300 630.700 490 631.700 480 726.700 501 731.300 400 734.300 334 756 338.300z" />
            <path d="M882.700 256.700L909 261.700 904 372.300 925 378.300 922.700 440 918.300 545 1013.300 566.700 1013.300 577.300 1029 580.700 1026.700 680.700 1014.300 678.700 1017.700 595 901 569 905.700 440 908.300 391 887.300 385.700 889.300 346.700 878.300 344z" />
          </g>
        </svg>

        <svg class="triad" viewBox="0 0 50 62" width="50" height="62">
          <path d="M12 28l8-8h17v20l-8 8H12z" fill="#d4d6d8" fill-opacity=".7" stroke="#b0b2b4" />
          <path d="M12 28h17v20M29 28l8-8" fill="none" stroke="#b0b2b4" />
          <path d="M12 33l25 7" stroke="#d49090" stroke-width="1.500" />
          <path d="M37 39V18" stroke="#1020c8" stroke-width="2" />
          <path d="M34 20l3-7 3 7z" fill="#1020c8" />
          <path d="M36 42L20 50" stroke="#209040" stroke-width="2" />
          <circle cx="37" cy="40" r="3" fill="#f0f0f0" />
          <text x="34" y="12" class="tz">Z</text>
          <text x="1" y="38" class="tx">X</text>
          <text x="15" y="58" class="ty">Y</text>
        </svg>

        <div class="meter">
          <i v-for="(c, i) in meterBars" :key="i" :style="{ background: c }"></i>
        </div>
      </div>
    </main>

    <footer class="statusbar">
      <span>选择对象并使用 MB3，或者双击某一对象</span>
      <div class="status-right">
        <svg><use href="#flag" /></svg>
        <svg><use href="#maxi" /></svg>
      </div>
    </footer>

    <div class="taskbar">
      <i class="orb"></i>
      <span class="task-btn"><em class="t-blue"></em></span>
      <span class="task-btn"><em class="t-red"></em></span>
      <span class="task-btn"><em class="t-gray"></em></span>
      <i class="task-show"></i>
    </div>

    <div class="watermark">
      <svg class="wm-logo" width="88" height="100" viewBox="0 0 88 100">
        <path d="M44 3l42 23v49L44 97 3 75V25z" fill="#fff" stroke="#fff" stroke-width="3" stroke-opacity=".8" />
        <path d="M62 13l24 13v49L44 97 19 84c-3-7-4-14-2-22l5 1 22 12 23-12V36c0-8-1-16-5-23z" fill="#74c4ec" />
        <path d="M44 3l18 10c4 7 5 15 5 23L44 23 22 36v27l-5-1c-2 8-1 15 2 22L3 75V25z" fill="#6f9fd6" />
        <path d="M3 52c5-14 19-26 37-29M86 50c-4 10-11 18-19 20M19 84c10 6 22 6 34 2" fill="none" stroke="#d8ecf8" stroke-width=".8" />
        <path d="M44 29l18 10-18 11-18-11z" fill="#6f9fd6" />
        <path d="M26 40l17 10v20L26 60z" fill="#6f9fd6" />
        <path d="M45 50l17-10v20L45 70z" fill="#74c4ec" />
      </svg>
      <div class="wm-text">
        <span class="wm-cn">3D世界网</span>
        <span class="wm-url">WWW.3DSJW.COM</span>
      </div>
    </div>
  </div>
</template>

<style>
html,
body {
  margin: 0;
  overflow: hidden;
}
</style>

<style scoped>
.app {
  position: relative;
  width: 1366px;
  height: 736px;
  display: flex;
  flex-direction: column;
  overflow: hidden;
  background: #fff;
  color: #222;
  font: 12px "Noto Sans", "Noto Sans CJK SC", sans-serif;
}
.sprite {
  position: absolute;
}
svg {
  flex: none;
  display: block;
}
.caret {
  display: block;
  flex: none;
  width: 0;
  height: 0;
  border-left: 4px solid transparent;
  border-right: 4px solid transparent;
  border-top: 4px solid #222;
}
.caret.up {
  border-top: 0;
  border-bottom: 4px solid #bbb;
}
.caret-bar {
  display: block;
  flex: none;
  width: 8px;
  height: 6px;
  border-top: 1px solid #222;
  position: relative;
}
.caret-bar::after {
  content: "";
  position: absolute;
  left: 0;
  top: 2px;
  border-left: 4px solid transparent;
  border-right: 4px solid transparent;
  border-top: 4px solid #222;
}

/* title bar */
.titlebar {
  height: 26px;
  flex: none;
  display: flex;
  align-items: center;
  background: #fff;
}
.nx-logo {
  width: 38px;
  padding-left: 4px;
  box-sizing: border-box;
  font: bold 23px "Liberation Sans", sans-serif;
  color: #8ea6b8;
}
.vsep {
  width: 1px;
  height: 20px;
  background: #d8d8d8;
  flex: none;
}
.qa {
  width: 15px;
  height: 15px;
}
.s1 {
  margin-left: 3px;
}
.q-save {
  margin-left: 10px;
}
.s2 {
  margin-left: 6px;
}
.q-undo {
  margin-left: 8px;
}
.q-c1 {
  margin-left: 5px;
}
.q-redo {
  margin-left: 7px;
}
.s3 {
  margin-left: 5px;
}
.q-cut {
  margin-left: 7px;
}
.q-copy {
  margin-left: 9px;
}
.q-paste {
  margin-left: 7px;
}
.s4 {
  margin-left: 6px;
}
.q-view {
  margin-left: 7px;
}
.q-c2 {
  margin-left: 6px;
}
.s5 {
  margin-left: 4px;
}
.q-brush {
  margin-left: 6px;
}
.s6 {
  margin-left: 7px;
}
.q-win {
  margin-left: 7px;
}
.qa-label {
  margin: 0 2px 0 4px;
  font-size: 11.500px;
}
.titlebar > .caret-bar {
  margin-left: 3px;
}
.ime {
  position: absolute;
  left: 487px;
  top: 0;
  height: 26px;
  display: flex;
  align-items: center;
}
.ime-s {
  width: 25px;
  height: 25px;
  border-radius: 7px;
  background: #f4581c;
  color: #fff;
  font: bold 22px/25px "Liberation Sans", sans-serif;
  text-align: center;
  transform: rotate(-8deg);
  z-index: 1;
}
.ime-bar {
  margin-left: -2px;
  width: 160px;
  height: 23px;
  box-sizing: border-box;
  margin-top: 3px;
  padding-left: 9px;
  display: flex;
  align-items: center;
  border: 1px solid #c6dcea;
  background: #fff;
}
.ime-en {
  width: 14px;
  font-weight: 700;
  font-size: 14px;
  color: #e01818;
}
.doc-title {
  position: absolute;
  left: 684px;
  top: 3px;
  font-size: 13px;
  line-height: 20px;
  white-space: nowrap;
}
.cloud {
  position: absolute;
  left: 873px;
  top: 0;
  width: 33px;
  height: 25px;
  display: flex;
  align-items: center;
  justify-content: center;
  background: #2a8ae0;
  border-radius: 4px 0 0 4px;
}
.upload {
  position: absolute;
  left: 906px;
  top: 0;
  width: 71px;
  height: 25px;
  box-sizing: border-box;
  border: 1px solid #4a98d8;
  border-left: 0;
  border-radius: 0 4px 4px 0;
  background: linear-gradient(#c8e4f8, #8cc8f0);
  color: #556677;
  font-size: 12px;
  line-height: 23px;
  text-align: center;
}
.siemens {
  position: absolute;
  left: 1215px;
  top: 6px;
  font: bold 12px/14px "Liberation Sans", sans-serif;
  letter-spacing: .6px;
  color: #129a9a;
}
.win-ctrl {
  display: flex;
  align-items: center;
}
.titlebar .win-ctrl {
  position: absolute;
  left: 1302px;
  top: 5px;
  height: 18px;
}
.wc-min {
  width: 8px;
  height: 2px;
  background: #333;
  margin: 10px 12px 0 1px;
}
.wc-max {
  width: 12px;
  height: 11px;
  position: relative;
  margin-right: 10px;
  flex: none;
}
.wc-max::before {
  content: "";
  position: absolute;
  left: 3px;
  top: 0;
  width: 7px;
  height: 6px;
  border: 1px solid #333;
  border-top-width: 2px;
}
.wc-max::after {
  content: "";
  position: absolute;
  left: 0;
  top: 4px;
  width: 7px;
  height: 5px;
  border: 1px solid #333;
  border-top-width: 2px;
  background: #fff;
}
.tabbar .wc-max::after {
  background: #c6d6d4;
}
.wc-close {
  font: 400 14px/14px "DejaVu Sans", sans-serif;
  color: #333;
}

/* tabs */
.tabbar {
  height: 28px;
  flex: none;
  display: flex;
  align-items: stretch;
  background: #c6d6d4;
  font-size: 13px;
  line-height: 28px;
}
.file-tab {
  width: 81px;
  margin-right: 2px;
  text-align: center;
  background: #5a8a82;
  color: #fff;
}
.tab {
  width: 52px;
  text-align: center;
  color: #222;
}
.tab.wide {
  width: 76px;
}
.tab.active {
  background: #fff;
  color: #2f92cc;
  border-top: 1px solid #aaa;
  line-height: 27px;
}
.tab-right {
  margin-left: auto;
  display: flex;
  align-items: center;
  margin-right: 8px;
}
.search {
  width: 125px;
  height: 20px;
  box-sizing: border-box;
  display: flex;
  align-items: center;
  justify-content: space-between;
  padding: 0 1px 0 1px;
  border: 1px solid #aaa;
  background: #fff;
  color: #aaa;
  font-size: 12px;
  line-height: 18px;
  margin-right: 11px;
}
.tr-maxi {
  width: 16px;
  height: 16px;
  margin-right: 12px;
}
.tr-up {
  width: 14px;
  height: 10px;
  margin-right: 12px;
}
.help {
  width: 14px;
  height: 14px;
  border-radius: 50%;
  background: #3a62d0;
  color: #fff;
  font: bold 11px/14px "Liberation Sans", sans-serif;
  text-align: center;
  margin-right: 7px;
}

/* ribbon */
.ribbon {
  height: 93px;
  flex: none;
  display: flex;
  border-bottom: 1px solid #d8d8d8;
  box-sizing: content-box;
  font-size: 11px;
  line-height: 14px;
}
.group {
  flex: none;
  display: flex;
  flex-direction: column;
  box-sizing: border-box;
  height: 89px;
  margin-top: 5px;
  border-right: 1px solid #d4d4d4;
  padding-left: 13px;
}
.group-body {
  height: 70px;
  display: flex;
  align-items: flex-start;
}
.group-foot {
  margin-top: 2px;
  height: 16px;
  display: flex;
  align-items: center;
  color: #3c9ac8;
  font-size: 11px;
  margin-left: -13px;
}
.group-foot span {
  flex: 1;
  text-align: center;
}
.group-foot .caret {
  margin: 0 7px 0 1px;
  border-left-width: 3.500px;
  border-right-width: 3.500px;
}
.g-win {
  width: 50px;
  padding-left: 0;
}
.g-orient {
  width: 195px;
}
.g-vis {
  width: 533px;
}
.g-style {
  width: 88px;
}
.g-visual {
  width: 317px;
  padding-left: 12px;
}
.group-rest {
  flex: 1;
  display: flex;
  justify-content: flex-end;
  align-items: flex-end;
  padding: 0 5px 8px 0;
}
.big {
  flex: none;
  box-sizing: border-box;
  height: 74px;
  margin-top: -3px;
  padding-top: 3px;
  display: flex;
  flex-direction: column;
  align-items: center;
  white-space: nowrap;
  position: relative;
}
.big > span {
  position: absolute;
  top: 41px;
  left: 0;
  right: 0;
  text-align: center;
}
.big > .caret {
  position: absolute;
  top: 60px;
}
.center-x svg {
  margin-left: 10px;
}
.ico32 {
  width: 32px;
  height: 32px;
}
.ico-show {
  width: 32px;
  height: 24px;
  margin-top: 6px;
}
.ico-sec {
  width: 28px;
  height: 30px;
}
.ico-cut {
  width: 34px;
  height: 30px;
}
.w48 {
  width: 48px;
}
.w55 {
  width: 55px;
}
.w46 {
  width: 46px;
  margin-left: 2px;
}
.w51 {
  width: 51px;
  margin-left: 4px;
}
.w66 {
  width: 66px;
  margin-left: 4px;
}
.w34 {
  width: 34px;
}
.w49 {
  width: 49px;
}
.ml8 {
  margin-left: 8px;
}
.pressed {
  background: #c6d6d4;
  outline: 1px solid #a0b8b4;
  outline-offset: -1px;
}
.icon-grid {
  display: grid;
  grid-auto-rows: 22px;
  width: 75px;
}
.icon-grid.three {
  grid-template-columns: repeat(3, 25px);
}
.icon-grid.two {
  grid-template-columns: repeat(2, 25px);
  width: 50px;
  margin: 0 2px 0 14px;
}
.icon-grid svg {
  width: 15px;
  height: 15px;
}
.more {
  flex: none;
  width: 37px;
  display: flex;
  flex-direction: column;
  align-items: center;
}
.more > span:nth-child(2) {
  margin-top: 4px;
}
.more > .caret {
  margin-top: 7px;
}
.m13 {
  margin-left: 13px;
}
.m11 {
  margin-left: 11px;
}
.more-box {
  width: 37px;
  height: 33px;
  box-sizing: border-box;
  border: 1px solid #eee;
  border-radius: 3px;
  display: flex;
  align-items: center;
  justify-content: center;
}
.more-box svg {
  width: 16px;
  height: 16px;
}
.gallery {
  flex: none;
  list-style: none;
  margin: 0 0 0 12px;
  padding: 0;
  box-sizing: border-box;
  width: 115px;
  height: 66px;
  border: 1px solid #d0d0d0;
}
.gallery li {
  height: 21.300px;
  display: flex;
  align-items: center;
  gap: 5px;
  padding-left: 1px;
  position: relative;
  top: -1px;
}
.gallery svg {
  width: 16px;
  height: 16px;
}
.gallery-arrows {
  flex: none;
  width: 14px;
  height: 66px;
  margin-left: 2px;
  padding: 5px 0;
  box-sizing: border-box;
  display: flex;
  flex-direction: column;
  align-items: center;
  justify-content: space-between;
}
.gallery-arrows .caret.up {
  margin-top: 3px;
}
.layer-col {
  flex: none;
  width: 80px;
  margin-left: 13px;
}
.layer-select {
  width: 48px;
  height: 20px;
  box-sizing: border-box;
  margin: 1px 0 4px;
  padding: 0 6px 0 3px;
  display: flex;
  align-items: center;
  justify-content: space-between;
  border: 1px solid #aaa;
}
.layer-row {
  height: 22px;
  display: flex;
  align-items: center;
  gap: 5px;
  white-space: nowrap;
}
.layer-row svg {
  width: 15px;
  height: 15px;
}
.face-col {
  flex: none;
  width: 78px;
  margin: -3px 0 0 8px;
}
.face-row {
  height: 22px;
  display: flex;
  align-items: center;
  gap: 5px;
  padding-left: 3px;
  white-space: nowrap;
}
.face-row.on {
  width: 60px;
  box-sizing: border-box;
  background: #c6d6d4;
  outline: 1px solid #a8bebb;
  outline-offset: -1px;
}
.face-row svg {
  width: 15px;
  height: 15px;
}
.png {
  margin-top: 0;
  font: bold 14px/18px "Liberation Sans", sans-serif;
  color: #5a4c88;
}
.png-tri {
  margin: 1px 0 0 17px;
  width: 0;
  height: 0;
  border-top: 6px solid transparent;
  border-bottom: 6px solid transparent;
  border-left: 8px solid #c0349a;
}

/* toolbar */
.toolbar {
  height: 32px;
  flex: none;
  display: flex;
  align-items: center;
  box-sizing: border-box;
  padding: 2px 0 0 10px;
  border-bottom: 2px solid #a8a8a8;
}
.menu-ico {
  width: 16px;
  height: 16px;
}
.menu-label {
  margin: 0 3px 0 4px;
  font-size: 11.500px;
}
.tb-sep {
  width: 1px;
  height: 22px;
  background: #d4d4d4;
  flex: none;
}
.tb-sep.first {
  margin: 0 12px 0 5px;
}
.combo {
  height: 20px;
  box-sizing: border-box;
  display: flex;
  align-items: center;
  justify-content: space-between;
  padding: 0 6px 0 3px;
  border: 1px solid #a0a0a0;
  font-size: 11px;
  flex: none;
}
.c1w {
  width: 133px;
  margin-right: 8px;
}
.c2w {
  width: 140px;
  margin-right: 7px;
}
.tools {
  display: flex;
  align-items: center;
  height: 24px;
}
.tool {
  height: 23px;
  box-sizing: border-box;
  flex: none;
  display: flex;
  align-items: center;
  justify-content: center;
}
.tool svg {
  width: 16px;
  height: 16px;
}
.tool.on {
  background: #c6d6d4;
  border: 1px solid #a8bebb;
}
.tool .caret {
  border-left-width: 3.500px;
  border-right-width: 3.500px;
}
.tb-end {
  margin-left: auto;
  margin-right: 5px;
  margin-top: 8px;
}

/* workspace */
.workspace {
  flex: 1;
  min-height: 0;
  display: flex;
}
.rail {
  width: 32px;
  flex: none;
  box-sizing: border-box;
  background: #d9d9d9;
  border-right: 1px solid #a8a8a8;
  display: flex;
  flex-direction: column;
  align-items: center;
}
.rail-gear {
  width: 16px;
  height: 16px;
  margin: 4px 0 33px -2px;
}
.rail-ico {
  width: 24px;
  height: 24px;
  margin: 0 0 16px -2px;
}
.rail-active {
  width: 30px;
  height: 45px;
  margin: 0 -1px 8px 2px;
  flex: none;
  display: flex;
  align-items: center;
  justify-content: center;
  background: #fff;
  border: 1px solid #b8b8b8;
  border-right: 0;
  box-sizing: border-box;
  border-radius: 2px 0 0 2px;
}
.rail-ico.flat {
  margin: 0;
}
.m-cons {
  margin-bottom: 8px;
}
.m-books {
  margin-bottom: 31px;
}
.m-info {
  margin-bottom: 29px;
}
.m-page {
  margin-bottom: 29px;
}
.m-clock {
  margin-bottom: 18px;
}
.m-color {
  margin-bottom: 18px;
}
.m-feat {
  margin-bottom: 2px;
}
.rail-wave {
  width: 30px;
  height: 8px;
  margin: 0 0 8px;
}
.rail .caret.up.pale {
  margin-bottom: 12px;
  border-left-width: 3px;
  border-right-width: 3px;
}
.rail > .caret:not(.up) {
  margin-bottom: 10px;
  border-left-width: 3.500px;
  border-right-width: 3.500px;
}
.navigator {
  width: 188px;
  flex: none;
  box-sizing: border-box;
  background: #fff;
  border-right: 1px solid #bbb;
  padding: 0 9px 0 6px;
  display: flex;
  flex-direction: column;
}
.nav-head {
  height: 28px;
  flex: none;
  display: flex;
  align-items: center;
  justify-content: space-between;
  padding: 0 6px 0 4px;
}
.nav-max {
  width: 11px;
  height: 9px;
  border: 1px solid #222;
  border-top-width: 2px;
}
.tree {
  width: 172px;
  height: 414px;
  flex: none;
  box-sizing: border-box;
  border: 1px solid #ddd;
  display: flex;
  flex-direction: column;
}
.tree-head {
  height: 21px;
  flex: none;
  display: flex;
  align-items: center;
  gap: 16px;
  padding-left: 6px;
  background: #f0f0f0;
  border-bottom: 1px solid #ddd;
}
.sort-up {
  width: 0;
  height: 0;
  border-left: 5px solid transparent;
  border-right: 5px solid transparent;
  border-bottom: 5px solid #222;
}
.tree-mid {
  height: 372px;
  flex: none;
  display: flex;
  overflow: hidden;
}
.tree-rows {
  width: 152px;
  flex: none;
  overflow: hidden;
}
.row {
  position: relative;
  height: 20px;
  box-sizing: border-box;
  display: flex;
  align-items: center;
  border-bottom: 1px solid #f0f0f0;
  white-space: nowrap;
  overflow: hidden;
  color: #222;
}
.row.gray {
  color: #aaa;
}
.row.lv0 {
  padding-left: 19px;
}
.row.lv1 {
  padding-left: 40px;
}
.row::before {
  content: "";
  position: absolute;
  top: 0;
  bottom: 0;
  border-left: 1px dotted #888;
}
.row::after {
  content: "";
  position: absolute;
  top: 10px;
  border-top: 1px dotted #888;
}
.row.lv0::before {
  left: 9px;
}
.row.lv0:first-child::before {
  top: 10px;
}
.row.lv0.last::before {
  bottom: 10px;
}
.row.lv0::after {
  left: 9px;
  width: 10px;
}
.row.lv1::before {
  left: 28px;
}
.row.lv1::after {
  left: 28px;
  width: 10px;
}
.exp {
  position: absolute;
  left: 5px;
  top: 5px;
  width: 9px;
  height: 9px;
  box-sizing: border-box;
  z-index: 1;
  border: 1px solid #ccc;
  background: #fff;
  font: 9px/7px "Liberation Mono", monospace;
  color: #222;
  text-align: center;
}
.tick {
  width: 13px;
  height: 13px;
  margin: 0 3px 0 2px;
}
.box-wrap {
  position: relative;
  flex: none;
  width: 13px;
  height: 13px;
  margin-right: 2px;
}
.box {
  width: 13px;
  height: 13px;
}
.info-badge {
  position: absolute;
  left: -4px;
  top: -5px;
  width: 11px;
  height: 11px;
}
.row-ico {
  width: 16px;
  height: 16px;
  margin-right: 3px;
}
.lv0 .row-ico {
  margin-right: 4px;
}
.row-label {
  font-size: 12px;
}
.row-mark {
  flex: none;
  width: 2px;
  height: 11px;
  margin-left: 5px;
  background: #c87820;
}
.vscroll {
  flex: 1;
  background: #f4f4f4;
  display: flex;
  flex-direction: column;
  align-items: center;
}
.sb-up,
.sb-down {
  flex: none;
  width: 0;
  height: 0;
  border-left: 4px solid transparent;
  border-right: 4px solid transparent;
}
.sb-up {
  margin: 7px 0 6px;
  border-bottom: 4px solid #333;
}
.sb-down {
  margin-top: auto;
  margin-bottom: 8px;
  border-top: 4px solid #333;
}
.sb-thumb {
  width: 14px;
  height: 289px;
  flex: none;
  box-sizing: border-box;
  border: 1px solid #b0b0b0;
  border-radius: 2px;
  background: linear-gradient(90deg, #e8e8e8, #bdbdbd);
  display: flex;
  align-items: center;
  justify-content: center;
}
.sb-thumb em {
  width: 7px;
  height: 5px;
  border-top: 1px solid #555;
  border-bottom: 1px solid #555;
  background: linear-gradient(#555, #555) center / 100% 1px no-repeat;
}
.hscroll {
  height: 18px;
  flex: none;
  display: flex;
  align-items: center;
  padding: 0 11px 0 4px;
  background: #f4f4f4;
  border-top: 1px solid #eee;
}
.sb-left,
.sb-right {
  width: 0;
  height: 0;
  border-top: 4px solid transparent;
  border-bottom: 4px solid transparent;
}
.sb-left {
  border-right: 4px solid #333;
}
.sb-right {
  margin-left: auto;
  border-left: 4px solid #333;
}
.hs-thumb {
  width: 42px;
  height: 15px;
  margin-left: 6px;
  box-sizing: border-box;
  border: 1px solid #999;
  border-radius: 2px;
  background: linear-gradient(#eee, #bdbdbd);
  display: flex;
  align-items: center;
  justify-content: center;
}
.hs-thumb em {
  width: 7px;
  height: 7px;
  border-left: 1px solid #555;
  border-right: 1px solid #555;
  background: linear-gradient(#555, #555) center / 1px 100% no-repeat;
}
.nav-sash {
  flex: none;
  height: 5px;
  margin: 1px 0 0;
  width: 172px;
  box-sizing: border-box;
  background: #ddd;
  border: 1px solid #aaa;
}
.nav-section {
  width: 172px;
  height: 24px;
  box-sizing: border-box;
  flex: none;
  display: flex;
  align-items: center;
  justify-content: space-between;
  padding: 3px 6px 0 7px;
  border-bottom: 2px solid #d0d0d0;
  color: #3c98c8;
  font-size: 14px;
  line-height: 18px;
}
.viewport {
  position: relative;
  flex: 1;
  min-width: 0;
  background: linear-gradient(#b4b6b8 0, #cfd0d2 38%, #e4e5e7 70%, #e6e7e9 100%);
  overflow: hidden;
}
.model {
  position: absolute;
  left: 0;
  top: 0;
}
.triad {
  position: absolute;
  left: 10px;
  top: 436px;
}
.triad text {
  font: 11px "Liberation Sans", sans-serif;
}
.tz {
  fill: #1020c8;
}
.tx {
  fill: #d03030;
}
.ty {
  fill: #209040;
}
.meter {
  position: absolute;
  right: 0;
  top: 365px;
  width: 9px;
  height: 58px;
  box-sizing: border-box;
  padding: 3px 1px 2px 3px;
  border-radius: 4px 0 0 4px;
  background: #4e5056;
  display: flex;
  flex-direction: column;
  justify-content: space-between;
}
.meter i {
  display: block;
  height: 2px;
}

/* status */
.statusbar {
  height: 20px;
  flex: none;
  box-sizing: border-box;
  display: flex;
  align-items: center;
  justify-content: space-between;
  padding: 0 56px 0 3px;
  border-top: 1px solid #999;
  background: #fff;
  font-size: 11px;
  letter-spacing: .1px;
}
.status-right {
  display: flex;
  gap: 6px;
}
.status-right svg {
  width: 15px;
  height: 15px;
}
.taskbar {
  height: 9px;
  flex: none;
  display: flex;
  align-items: flex-start;
  background: linear-gradient(#5a8898 0, #164252 2px, #0e3040 100%);
  overflow: hidden;
  position: relative;
}
.orb {
  width: 30px;
  height: 30px;
  margin: 1px 18px 0 12px;
  border-radius: 50%;
  flex: none;
  background: #2a6a90;
  border: 1px solid #bcd0dc;
  box-sizing: border-box;
}
.task-btn {
  width: 58px;
  height: 12px;
  margin-right: 4px;
  margin-top: 1px;
  flex: none;
  border-radius: 3px 3px 0 0;
  background: linear-gradient(#d8e4e8, #a8bcc4);
  display: flex;
  justify-content: center;
}
.task-btn em {
  display: block;
  width: 18px;
  height: 18px;
  margin-top: 1px;
  border-radius: 50%;
}
.t-blue {
  background: #2080d8;
}
.t-red {
  background: #d84050;
}
.t-gray {
  background: #7890b0;
}
.task-show {
  position: absolute;
  right: 0;
  top: 1px;
  width: 12px;
  height: 8px;
  background: #7a9aa4;
}

/* watermark */
.watermark {
  position: absolute;
  left: 1063px;
  top: 632px;
  display: flex;
  align-items: flex-start;
  gap: 7px;
}
.wm-text {
  display: flex;
  flex-direction: column;
  align-items: flex-start;
  padding-top: 16px;
}
.wm-cn {
  font: 700 46px/52px "Noto Sans", "Noto Sans CJK SC", sans-serif;
  letter-spacing: 1px;
  color: #6fc3ea;
  text-shadow: 1px 1px 0 #fff, -1px -1px 0 #fff, 1px -1px 0 #fff, -1px 1px 0 #fff;
  white-space: nowrap;
}
.wm-url {
  font: 700 14px/14px "Liberation Sans", sans-serif;
  letter-spacing: 5.300px;
  margin-left: 4px;
  color: #6fc3ea;
  text-shadow: 1px 0 0 #fff, -1px 0 0 #fff;
  white-space: nowrap;
}
</style>
